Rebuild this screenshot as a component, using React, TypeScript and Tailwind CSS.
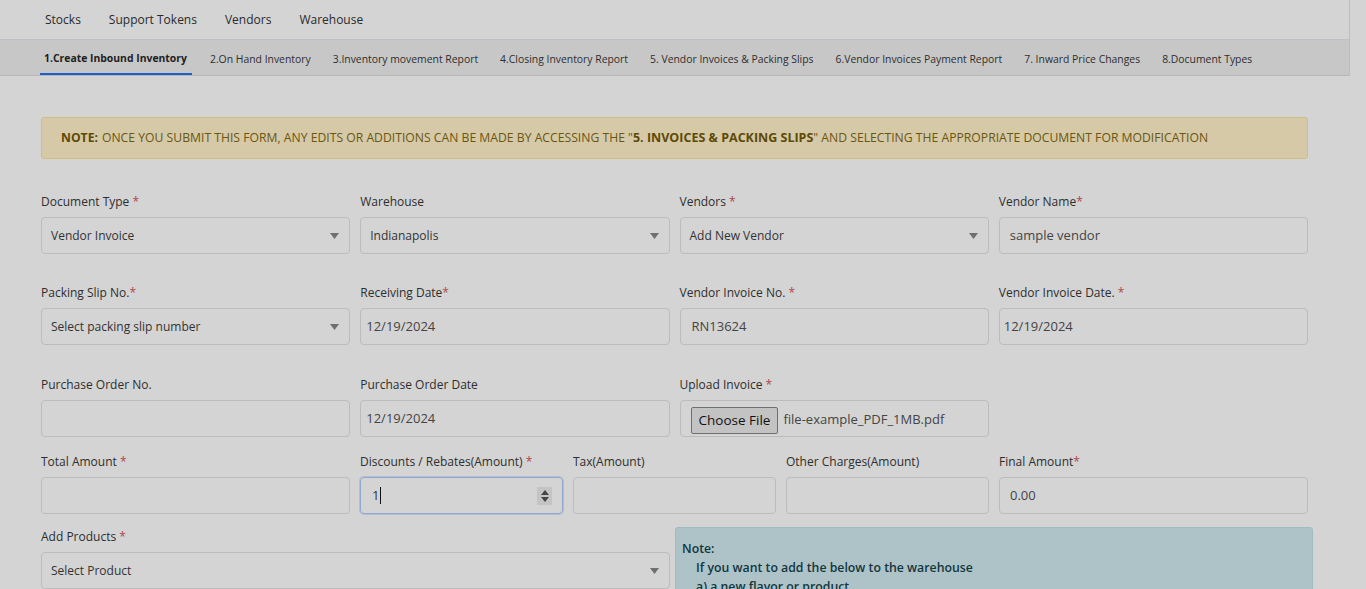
const topLinks = ["Stocks", "Support Tokens", "Vendors", "Warehouse"];

const tabs = [
  "1.Create Inbound Inventory",
  "2.On Hand Inventory",
  "3.Inventory movement Report",
  "4.Closing Inventory Report",
  "5. Vendor Invoices & Packing Slips",
  "6.Vendor Invoices Payment Report",
  "7. Inward Price Changes",
  "8.Document Types",
];

const Caret = () => (
  <svg width="9" height="6" viewBox="0 0 9 6" className="shrink-0">
    <path d="M0 0h9L4.5 6z" fill="#6f6f6f" />
  </svg>
);

const Label = ({ text, req, tight }: { text: string; req?: boolean; tight?: boolean }) => (
  <div className="text-[12px] text-[#2e2e2e] mb-[6px] leading-[18px] whitespace-nowrap">
    {text}
    {req && <span className="text-[#b0464a]">{tight ? "*" : " *"}</span>}
  </div>
);

const Select = ({ value }: { value: string }) => (
  <div className="h-[37px] border border-[#bcbcbc] rounded-[4px] flex items-center justify-between pl-[9px] pr-[10px] text-[12px] text-[#333]">
    <span>{value}</span>
    <Caret />
  </div>
);

const Input = ({ value, pad = "px-[10px]" }: { value?: string; pad?: string }) => (
  <div className={`h-[37px] border border-[#bcbcbc] rounded-[4px] flex items-center ${pad} text-[13px] text-[#444]`}>
    {value}
  </div>
);

export default function App() {
  return (
    <div className="min-h-[589px] bg-[#d4d4d4] font-['Open_Sans','Noto_Sans',sans-serif] overflow-hidden">
      <div className="w-[1350px] border-r border-[#bcbcc4]">
        <nav className="h-[40px] flex items-center gap-[28px] pl-[45px] pt-[1px] border-b border-[#bfbfc6] text-[12px] text-[#2a2a2a]">
          {topLinks.map((l) => (
            <span key={l}>{l}</span>
          ))}
        </nav>
        <div className="h-[36px] bg-[#c7c7c7] border-b border-[#b6b6bd] flex items-stretch pl-[40px] gap-[14px] text-[10.4px] text-[#2e2e2e]">
          {tabs.map((t, i) => (
            <div
              key={t}
              className={
                i === 0
                  ? "flex items-center pt-[4px] font-bold pl-[4px] pr-[5px] border-b-2 border-[#1f5fc4] text-[#1e1e1e]"
                  : "flex items-center pt-[4px] px-[4px]"
              }
            >
              {t}
            </div>
          ))}
        </div>
      </div>

      <main className="pl-[41px] w-[1308px] pt-[41px]">
        <div className="h-[42px] bg-[#d5c9a8] border border-[#d0bf85] rounded-[3px] flex items-center pl-[19px] text-[12.2px] text-[#6b560f]">
          <b className="text-[#5e4a06] mr-[4px]">NOTE:</b>
          ONCE YOU SUBMIT THIS FORM, ANY EDITS OR ADDITIONS CAN BE MADE BY ACCESSING THE "
          <b className="text-[#5e4a06] text-[12.5px]">5. INVOICES &amp; PACKING SLIPS</b>" AND SELECTING THE APPROPRIATE DOCUMENT FOR MODIFICATION
        </div>

        <div className="grid grid-cols-4 gap-x-[10px] mt-[34px]">
          <div>
            <Label text="Document Type" req />
            <Select value="Vendor Invoice" />
          </div>
          <div>
            <Label text="Warehouse" />
            <Select value="Indianapolis" />
          </div>
          <div>
            <Label text="Vendors" req />
            <Select value="Add New Vendor" />
          </div>
          <div>
            <Label text="Vendor Name" req tight />
            <Input value="sample vendor" />
          </div>
        </div>

        <div className="grid grid-cols-4 gap-x-[10px] mt-[30px]">
          <div>
            <Label text="Packing Slip No." req tight />
            <Select value="Select packing slip number" />
          </div>
          <div>
            <Label text="Receiving Date" req tight />
            <Input value="12/19/2024" pad="px-[5px]" />
          </div>
          <div>
            <Label text="Vendor Invoice No." req />
            <Input value="RN13624" pad="px-[11px]" />
          </div>
          <div>
            <Label text="Vendor Invoice Date." req />
            <Input value="12/19/2024" pad="px-[4px]" />
          </div>
        </div>

        <div className="grid grid-cols-4 gap-x-[10px] mt-[31px]">
          <div>
            <Label text="Purchase Order No." />
            <Input />
          </div>
          <div>
            <Label text="Purchase Order Date" />
            <Input value="12/19/2024" pad="px-[5px]" />
          </div>
          <div>
            <Label text="Upload Invoice" req />
            <div className="h-[37px] border border-[#bcbcbc] rounded-[4px] flex items-center pl-[10px] pt-[3px] text-[13px] text-[#444]">
              <span className="h-[27px] px-[7px] flex items-center border border-[#6f6f6f] rounded-[2px] bg-[#c3c3c3] text-[#111] text-[13.5px] mr-[5px]">
                Choose File
              </span>
              file-example_PDF_1MB.pdf
            </div>
          </div>
          <div />
        </div>

        <div className="flex gap-x-[10px] mt-[16px]">
          <div className="w-[309px]">
            <Label text="Total Amount" req />
            <Input />
          </div>
          <div className="w-[203px]">
            <Label text="Discounts / Rebates(Amount)" req />
            <div className="h-[37px] border border-[#8fa9d1] rounded-[4px] shadow-[0_0_0_1px_rgba(120,150,210,0.35)] flex items-center justify-between pl-[11px] pr-[10px] text-[13px] text-[#333]">
              <span className="flex items-center">
                1<span className="w-px h-[17px] bg-[#111] ml-px" />
              </span>
              <span className="w-[15px] h-[18px] bg-[#c4c4c4] flex flex-col items-center justify-center gap-[2px]">
                <svg width="8" height="5" viewBox="0 0 8 5"><path d="M4 0l4 5H0z" fill="#444" /></svg>
                <svg width="8" height="5" viewBox="0 0 8 5"><path d="M0 0h8L4 5z" fill="#444" /></svg>
              </span>
            </div>
          </div>
          <div className="w-[203px]">
            <Label text="Tax(Amount)" />
            <Input />
          </div>
          <div className="w-[203px]">
            <Label text="Other Charges(Amount)" />
            <Input />
          </div>
          <div className="w-[309px]">
            <Label text="Final Amount" req tight />
            <Input value="0.00" />
          </div>
        </div>

        <div className="flex gap-x-[5px] mt-[13px] w-[1272px]">
          <div className="w-[629px] shrink-0 pt-[1px]">
            <Label text="Add Products" req />
            <Select value="Select Product" />
          </div>
          <div className="w-[638px] shrink-0 h-[80px] bg-[#adc3c8] border border-[#9fbcc2] rounded-[3px] pl-[6px] pt-[11px] text-[12.3px] font-semibold text-[#12363d] leading-[19px]">
            <div>Note:</div>
            <div className="pl-[14px]">If you want to add the below to the warehouse</div>
            <div className="pl-[14px]">a) a new flavor or product</div>
          </div>
        </div>
      </main>
    </div>
  );
}
